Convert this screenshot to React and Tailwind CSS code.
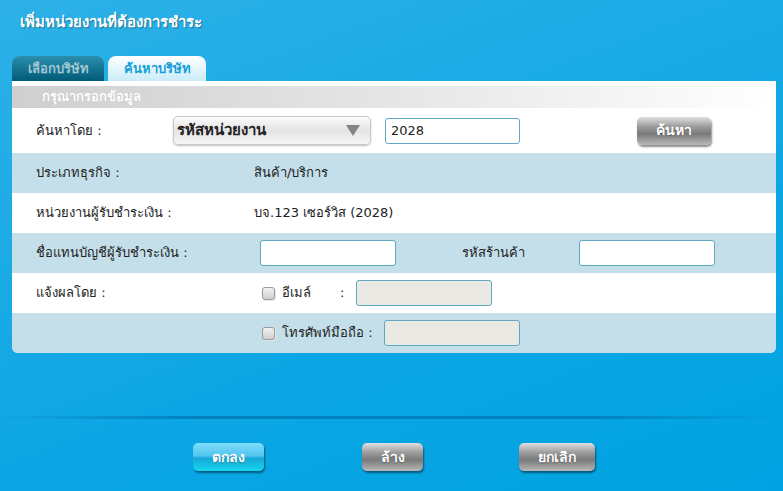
import React from "react";

const Row = ({ blue, children }) => (
  <div className={`flex items-center h-[40px] ${blue ? "bg-[#c5dfea]" : "bg-white"}`}>{children}</div>
);

const TextBox = ({ w = "w-[136px]", value = "", disabled }) => (
  <input
    readOnly
    value={value}
    className={`${w} h-[26px] rounded-[3px] border border-[#5fa9c6] px-[5px] text-[13px] text-[#222] outline-none ${disabled ? "bg-[#ebe9e3]" : "bg-white"}`}
  />
);

const Check = () => (
  <span className="inline-block w-[13px] h-[13px] rounded-[3px] border border-[#9a9a9a] bg-gradient-to-b from-[#f2f2f2] to-[#cfcfcf] shadow-[1px_1px_0_#e8e8e8]" />
);

const GrayBtn = ({ label, w }) => (
  <button
    className={`${w} h-[28px] rounded-[5px] text-white font-bold text-[14px] bg-[linear-gradient(to_bottom,#e0e0e0_0%,#9a9a9a_35%,#7a7a7a_60%,#b8b8b8_100%)] shadow-[1px_2px_2px_rgba(0,0,0,0.45)] [text-shadow:0_1px_1px_rgba(0,0,0,0.4)]`}
  >
    {label}
  </button>
);

export default function App() {
  return (
    <div
      className="w-[783px] h-[491px] overflow-hidden bg-[linear-gradient(160deg,#2db1e7_0%,#0da6e4_60%,#00a3e2_100%)] text-[#222] text-[13px] flex flex-col"
      style={{ fontFamily: "Tahoma, 'DejaVu Sans', 'Noto Sans', sans-serif" }}
    >
      <div className="h-[56px] pl-[20px] pt-[11px] text-white text-[15px] font-bold [text-shadow:1px_1px_1px_rgba(0,0,0,0.35)]">
        เพิ่มหน่วยงานที่ต้องการชำระ
      </div>

      <div className="flex pl-[12px] gap-[4px] h-[25px] items-end">
        <div className="w-[92px] h-[25px] rounded-t-[8px] bg-gradient-to-b from-[#2a8fad] to-[#005b78] flex items-center justify-center text-[#9fc6d3] font-bold text-[13px]">
          เลือกบริษัท
        </div>
        <div className="w-[98px] h-[25px] rounded-t-[8px] bg-gradient-to-b from-[#ffffff] to-[#c9ecf8] flex items-center justify-center text-[#169fd8] font-bold text-[13px]">
          ค้นหาบริษัท
        </div>
      </div>

      <div className="ml-[12px] w-[764px] bg-white rounded-b-[6px] overflow-hidden pt-[5px]">
        <div className="h-[22px] bg-gradient-to-r from-[#cfcfcf] via-[#e6e6e6] to-white flex items-center pl-[30px] text-white font-bold text-[13px] [text-shadow:0_0_1px_rgba(0,0,0,0.15)]">
          กรุณากรอกข้อมูล
        </div>

        <div className="flex items-center h-[45px] bg-white">
          <div className="w-[161px] pl-[24px]">ค้นหาโดย :</div>
          <div className="w-[198px] h-[29px] rounded-[5px] border border-[#c8c8c8] bg-gradient-to-b from-[#fbfbfb] via-[#e4e4e4] to-[#f7f7f7] shadow-[0_1px_2px_rgba(0,0,0,0.25)] flex items-center justify-between pl-[3px] pr-[10px]">
            <span className="text-[15px] font-bold text-[#222]">รหัสหน่วยงาน</span>
            <svg width="14" height="11" viewBox="0 0 14 11">
              <path d="M0 0 H14 L7 11 Z" fill="#858585" />
            </svg>
          </div>
          <div className="ml-[14px]">
            <TextBox w="w-[135px]" value="2028" />
          </div>
          <div className="ml-[117px]">
            <GrayBtn label="ค้นหา" w="w-[74px]" />
          </div>
        </div>

        <Row blue>
          <div className="w-[242px] pl-[24px]">ประเภทธุรกิจ :</div>
          <div>สินค้า/บริการ</div>
        </Row>
        <Row>
          <div className="w-[242px] pl-[24px]">หน่วยงานผู้รับชำระเงิน :</div>
          <div>บจ.123 เซอร์วิส (2028)</div>
        </Row>
        <Row blue>
          <div className="w-[248px] pl-[24px]">ชื่อแทนบัญชีผู้รับชำระเงิน :</div>
          <TextBox />
          <div className="w-[183px] pl-[66px]">รหัสร้านค้า</div>
          <TextBox />
        </Row>
        <Row>
          <div className="w-[250px] pl-[24px]">แจ้งผลโดย :</div>
          <Check />
          <span className="ml-[7px] w-[58px]">อีเมล์</span>
          <span className="w-[16px]">:</span>
          <TextBox disabled />
        </Row>
        <Row blue>
          <div className="w-[250px] pl-[24px]"></div>
          <Check />
          <span className="ml-[7px] w-[102px]">โทรศัพท์มือถือ :</span>
          <TextBox disabled />
        </Row>
      </div>

      <div className="h-[63px]" />
      <div className="h-[3px] bg-[linear-gradient(to_right,rgba(0,120,180,0)_0%,rgba(0,120,180,0.8)_25%,rgba(0,120,180,0.8)_75%,rgba(0,120,180,0)_100%)]" />

      <div className="flex pt-[24px]">
        <button className="ml-[193px] w-[71px] h-[28px] rounded-[5px] text-white font-bold text-[14px] bg-[linear-gradient(to_bottom,#7fdcfb_0%,#52c6ef_45%,#16a8d8_55%,#16d6ee_100%)] shadow-[1px_2px_2px_rgba(0,0,0,0.45)] [text-shadow:0_1px_1px_rgba(0,0,0,0.35)]">
          ตกลง
        </button>
        <div className="ml-[98px]">
          <GrayBtn label="ล้าง" w="w-[61px]" />
        </div>
        <div className="ml-[96px]">
          <GrayBtn label="ยกเลิก" w="w-[76px]" />
        </div>
      </div>
    </div>
  );
}
